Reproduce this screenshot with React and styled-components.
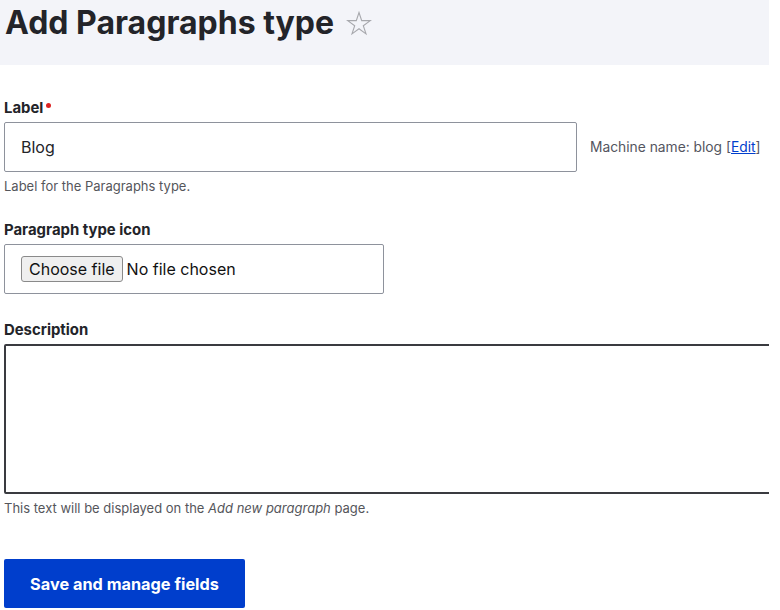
import React from "react";
import styled, { createGlobalStyle } from "styled-components";

const Global = createGlobalStyle`
  html, body { margin: 0; padding: 0; background: #fff; }
  body { font-family: Inter, "Noto Sans", "Liberation Sans", sans-serif; color: #232429; }
  * { box-sizing: border-box; }
`;

const Page = styled.div`
  width: 769px;
  overflow: hidden;
`;

const Header = styled.header`
  height: 65px;
  background: #f3f4f9;
  padding: 3px 0 0 5px;
  display: flex;
  align-items: flex-start;
  gap: 12px;
`;

const Title = styled.h1`
  margin: 0;
  font-size: 32px;
  line-height: 40px;
  font-weight: 700;
  color: #232429;
`;

const Star = styled.svg`
  width: 26px;
  height: 26px;
  margin-top: 8px;
`;

const Form = styled.form`
  display: flex;
  flex-direction: column;
  padding: 0 0 0 4px;
`;

const Field = styled.div`
  margin-top: ${(p) => p.$top}px;
  display: flex;
  flex-direction: column;
`;

const Label = styled.label`
  font-size: 14.9px;
  line-height: 18px;
  font-weight: 700;
  color: #232429;
  margin-bottom: 5px;
  display: flex;
  align-items: flex-start;
`;

const Required = styled.span`
  display: inline-block;
  width: 5px;
  height: 5px;
  border-radius: 50%;
  background: #dc2323;
  margin: 4px 0 0 3px;
`;

const Row = styled.div`
  display: flex;
  align-items: center;
  gap: 13px;
`;

const TextInput = styled.div`
  width: 573px;
  height: 50px;
  border: 1px solid #8e929c;
  border-radius: 2px;
  padding: 0 16px;
  display: flex;
  align-items: center;
  font-size: 16px;
  color: #232429;
`;

const Machine = styled.span`
  font-size: 13.8px;
  color: #545560;
  a { color: #003ecc; text-decoration: underline; }
`;

const Help = styled.div`
  margin-top: 6px;
  font-size: 13px;
  line-height: 16px;
  color: #55565b;
  em { font-style: italic; }
`;

const FileBox = styled.div`
  width: 380px;
  height: 50px;
  border: 1px solid #8e929c;
  border-radius: 2px;
  padding: 0 0 0 16px;
  display: flex;
  align-items: center;
  gap: 4px;
`;

const ChooseButton = styled.span`
  display: inline-flex;
  align-items: center;
  height: 26px;
  padding: 0 7px;
  background: #efefef;
  border: 1px solid #8a8a8a;
  border-radius: 3px;
  font-size: 16px;
  color: #111;
`;

const NoFile = styled.span`
  font-size: 16px;
  color: #111;
`;

const TextArea = styled.div`
  width: 800px;
  height: 150px;
  border: 2px solid #3a3b40;
  border-radius: 2px;
`;

const Actions = styled.div`
  margin-top: 43px;
`;

const Primary = styled.button`
  width: 241px;
  height: 49px;
  background: #003ecc;
  color: #fff;
  border: none;
  border-radius: 2px;
  font-family: Inter, "Liberation Sans", sans-serif;
  font-size: 16.3px;
  font-weight: 700;
  cursor: pointer;
`;

export default function App() {
  return (
    <Page>
      <Global />
      <Header>
        <Title>Add Paragraphs type</Title>
        <Star viewBox="0 0 26 26">
          <polygon
            points="13,1.5 15.7,9.6 24.3,9.6 17.3,14.7 20,22.9 13,17.8 6,22.9 8.7,14.7 1.7,9.6 10.3,9.6"
            fill="none"
            stroke="#a7a8ad"
            strokeWidth="1.1"
          />
        </Star>
      </Header>
      <Form>
        <Field $top={34}>
          <Label>
            Label<Required />
          </Label>
          <Row>
            <TextInput>Blog</TextInput>
            <Machine>
              Machine name: blog [<a href="#">Edit</a>]
            </Machine>
          </Row>
          <Help>Label for the Paragraphs type.</Help>
        </Field>
        <Field $top={27}>
          <Label>Paragraph type icon</Label>
          <FileBox>
            <ChooseButton>Choose file</ChooseButton>
            <NoFile>No file chosen</NoFile>
          </FileBox>
        </Field>
        <Field $top={27}>
          <Label>Description</Label>
          <TextArea />
          <Help>
            This text will be displayed on the <em>Add new paragraph</em> page.
          </Help>
        </Field>
        <Actions>
          <Primary type="button">Save and manage fields</Primary>
        </Actions>
      </Form>
    </Page>
  );
}
